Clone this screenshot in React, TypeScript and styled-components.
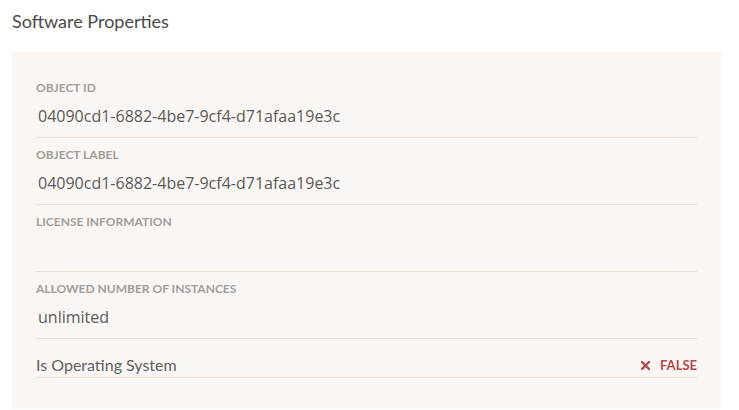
import React from "react";
import styled, { createGlobalStyle } from "styled-components";

const GlobalStyle = createGlobalStyle`
  body {
    margin: 0;
    background: #ffffff;
    font-family: Lato, "Open Sans", sans-serif;
  }
`

const Page = styled.div`
  padding: 8px 18px 0 12px;
`

const Title = styled.h2`
  margin: 0 0 17px 0;
  font-size: 18px;
  line-height: 27px;
  font-weight: 400;
  color: #4a4a4a;
`

const Panel = styled.div`
  background: #faf6f3;
  padding: 19px 24px 31px 24px;
`

const Field = styled.div`
  padding: 10px 0 9px 0;
  border-bottom: 1px solid #ecdfd6;
`

const Label = styled.div`
  font-size: 12px;
  line-height: 14px;
  font-weight: 700;
  color: #a29d99;
  text-transform: uppercase;
`

const Value = styled.div`
  margin-top: 9px;
  padding-left: 2px;
  font-family: "Open Sans", sans-serif;
  font-size: 16px;
  line-height: 24px;
  min-height: 24px;
  color: #5a5a5a;
`

const ToggleRow = styled.div`
  display: flex;
  align-items: center;
  justify-content: space-between;
  padding: 15px 0 1px 0;
  border-bottom: 1px solid #ecdfd6;
`

const ToggleName = styled.span`
  font-size: 16px;
  line-height: 22px;
  color: #5f5f5f;
`

const Status = styled.span`
  display: flex;
  align-items: center;
  gap: 10px;
  font-size: 13px;
  font-weight: 700;
  color: #b04a4e;
`

const fields = [
  { label: "Object ID", value: "04090cd1-6882-4be7-9cf4-d71afaa19e3c" },
  { label: "Object Label", value: "04090cd1-6882-4be7-9cf4-d71afaa19e3c" },
  { label: "License Information", value: "" },
  { label: "Allowed Number of Instances", value: "unlimited" },
]

const App = () => {
  return (
    <>
      <GlobalStyle />
      <Page>
        <Title>Software Properties</Title>
        <Panel>
          {fields.map((f) => (
            <Field key={f.label}>
              <Label>{f.label}</Label>
              <Value>{f.value}</Value>
            </Field>
          ))}
          <ToggleRow>
            <ToggleName>Is Operating System</ToggleName>
            <Status>
              <svg width="9" height="9" viewBox="0 0 9 9">
                <path d="M1 1 L8 8 M8 1 L1 8" stroke="#b04a4e" strokeWidth="2.4" strokeLinecap="square" />
              </svg>
              FALSE
            </Status>
          </ToggleRow>
        </Panel>
      </Page>
    </>
  )
}

export default App;
